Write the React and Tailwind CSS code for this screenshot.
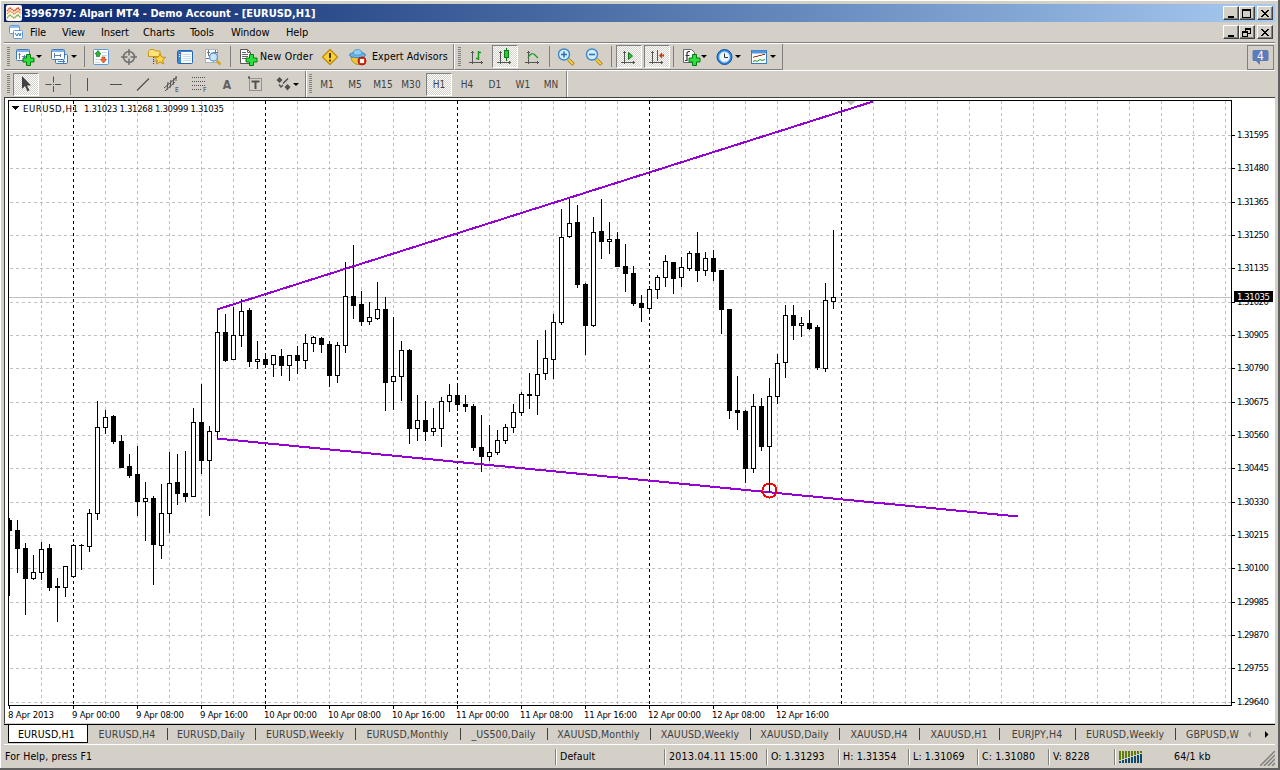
import clsx from 'clsx';

// [high, top, bottom, low, filled], one candle every 8px
const candles = [
  [518, 520, 531, 596, 1], [520, 530, 549, 573, 1], [543, 548, 579, 615, 1], [555, 572, 579, 580, 0],
  [542, 549, 573, 580, 0], [544, 548, 588, 591, 1], [578, 586, 588, 622, 1], [566, 566, 588, 597, 0],
  [544, 545, 577, 578, 0], [544, 545, 546, 570, 1], [509, 513, 547, 552, 0], [401, 427, 514, 520, 0],
  [410, 417, 428, 434, 0], [415, 416, 442, 444, 1], [435, 441, 468, 468, 1], [454, 466, 476, 478, 1],
  [446, 474, 502, 516, 1], [482, 498, 502, 541, 0], [496, 498, 545, 585, 1], [484, 513, 546, 559, 0],
  [452, 483, 514, 533, 0], [454, 482, 494, 505, 1], [451, 493, 497, 502, 1], [408, 422, 497, 497, 0],
  [384, 422, 461, 474, 1], [426, 431, 461, 516, 0], [309, 332, 432, 439, 0], [314, 332, 361, 362, 1],
  [307, 335, 360, 360, 0], [299, 311, 336, 347, 0], [308, 310, 362, 367, 1], [341, 359, 362, 369, 0],
  [355, 359, 365, 368, 1], [355, 355, 365, 377, 0], [349, 356, 366, 376, 1], [355, 355, 366, 381, 0],
  [346, 355, 361, 374, 1], [334, 343, 361, 369, 0], [336, 337, 344, 352, 0], [337, 338, 345, 353, 1],
  [341, 344, 376, 387, 1], [342, 345, 376, 383, 0], [262, 296, 346, 353, 0], [245, 296, 306, 319, 1],
  [291, 304, 322, 326, 1], [302, 317, 322, 325, 0], [282, 309, 319, 320, 0], [297, 309, 383, 411, 1],
  [317, 376, 382, 410, 0], [341, 350, 377, 401, 0], [349, 350, 429, 444, 1], [395, 420, 429, 441, 0],
  [401, 420, 432, 441, 1], [408, 428, 432, 436, 0], [397, 401, 429, 447, 0], [384, 395, 402, 412, 0],
  [386, 395, 405, 411, 1], [395, 404, 407, 412, 1], [404, 406, 448, 451, 1], [415, 447, 457, 472, 1],
  [425, 452, 457, 461, 0], [430, 440, 453, 455, 0], [424, 427, 441, 444, 0], [404, 412, 428, 433, 0],
  [392, 394, 413, 416, 0], [373, 394, 396, 409, 1], [340, 374, 396, 415, 0], [330, 358, 374, 380, 0],
  [314, 322, 360, 379, 0], [209, 237, 323, 325, 0], [197, 223, 237, 238, 0], [205, 222, 285, 288, 1],
  [283, 284, 326, 355, 1], [217, 232, 326, 327, 0], [199, 231, 242, 259, 1], [222, 239, 242, 254, 0],
  [232, 239, 267, 267, 1], [244, 266, 274, 292, 1], [266, 273, 304, 306, 1], [295, 303, 308, 322, 1],
  [286, 289, 309, 312, 0], [275, 277, 290, 299, 0], [255, 261, 278, 287, 0], [262, 262, 279, 294, 1],
  [257, 267, 278, 287, 0], [251, 253, 269, 271, 0], [232, 253, 271, 282, 1], [252, 258, 271, 276, 0],
  [250, 258, 272, 281, 1], [270, 270, 310, 334, 1], [309, 309, 411, 419, 1], [376, 410, 413, 430, 1],
  [410, 411, 469, 483, 1], [394, 406, 469, 473, 0], [398, 406, 447, 451, 1], [378, 396, 447, 492, 0],
  [354, 363, 397, 404, 0], [305, 315, 363, 378, 0], [305, 315, 326, 340, 1], [317, 323, 326, 337, 0],
  [310, 323, 329, 330, 1], [325, 327, 368, 370, 1], [283, 300, 369, 372, 0], [230, 297, 302, 309, 0],
];

const prices = [
  [135, '1.31595'], [168, '1.31480'], [202, '1.31365'], [235, '1.31250'], [268, '1.31135'], [302, '1.31020'],
  [335, '1.30905'], [368, '1.30790'], [402, '1.30675'], [435, '1.30560'], [468, '1.30445'], [502, '1.30330'],
  [535, '1.30215'], [568, '1.30100'], [602, '1.29985'], [635, '1.29870'], [668, '1.29755'], [702, '1.29640'],
];

const dates = [
  '8 Apr 2013', '9 Apr 00:00', '9 Apr 08:00', '9 Apr 16:00', '10 Apr 00:00', '10 Apr 08:00', '10 Apr 16:00',
  '11 Apr 00:00', '11 Apr 08:00', '11 Apr 16:00', '12 Apr 00:00', '12 Apr 08:00', '12 Apr 16:00',
];

const dayLines = [73, 265, 457, 649, 841];
const gridX = Array.from({ length: 38 }, (_, i) => 41 + i * 32).filter(x => x < 1231 && !dayLines.includes(x));

const tabs = [
  ['EURUSD,H4', 'w-[80px]'], ['EURUSD,Daily', 'w-[88px]'], ['EURUSD,Weekly', 'w-[100px]'],
  ['EURUSD,Monthly', 'w-[105px]'], ['_US500,Daily', 'w-[87px]'], ['XAUUSD,Monthly', 'w-[103px]'],
  ['XAUUSD,Weekly', 'w-[100px]'], ['XAUUSD,Daily', 'w-[89px]'], ['XAUUSD,H4', 'w-[80px]'],
  ['XAUUSD,H1', 'w-[80px]'], ['EURJPY,H4', 'w-[76px]'], ['EURUSD,Weekly', 'w-[100px]'],
];

const Chart = () => (
  <svg
    width="1270"
    height="625"
    viewBox="5 98 1270 625"
    shapeRendering="crispEdges"
    className="block bg-white font-['DejaVu_Sans_Condensed','DejaVu_Sans',sans-serif] text-[9.5px]"
  >
    <g stroke="#c0c0c0" strokeDasharray="3 3">
      {prices.map(([y]) => <path key={y} d={`M10 ${y + 0.5}H1231`} />)}
      {gridX.map(x => <path key={x} d={`M${x + 0.5} 101V705`} />)}
    </g>
    <g stroke="#000" strokeDasharray="3 3">
      {dayLines.map(x => <path key={x} d={`M${x + 0.5} 101V705`} />)}
    </g>
    <path d="M9 297.5H1231" stroke="#c0c0c0" />
    <path d="M846 101h9l-4.500 4.500z" fill="#c0c0c0" />

    {candles.map(([high, top, bottom, low, filled], i) => {
      const x = 9 + i * 8;
      return (
        <g key={x}>
          <rect x={x} y={high} width="1" height={low - high} />
          <rect x={i ? x - 2 : x} y={top} width={i ? 5 : 3} height={bottom - top} />
          {!filled && <rect x={x - 1} y={top + 1} width="3" height={bottom - top - 2} fill="#fff" />}
        </g>
      );
    })}

    <g stroke="#9400d3" strokeWidth="2" fill="none">
      <path d="M217 309.5L873 101.5" />
      <path d="M217 438.5L1018 516.5" />
    </g>
    <circle cx="769.5" cy="490.5" r="7" fill="none" stroke="#f00" strokeWidth="2" />
    <path d="M769.5 483V492" stroke="#000" />

    <path d="M8.5 706V100.5H1231.5V705.5H8" fill="none" stroke="#000" />
    {prices.map(([y, label]) => (
      <g key={label}>
        <path d={`M1232 ${y + 0.5}h3`} stroke="#000" />
        <text x="1237" y={y + 3} textLength="32">{label}</text>
      </g>
    ))}
    <rect x="1234" y="291" width="39" height="11" />
    <text x="1237" y="300" textLength="33" fill="#fff">1.31035</text>
    {dates.map((label, i) => (
      <g key={label}>
        <path d={`M${9.5 + i * 64} 706v3`} stroke="#000" />
        <text x={8 + i * 64} y="718" textLength={i === 0 ? 46 : i < 4 ? 48 : 53}>{label}</text>
      </g>
    ))}
    <path d="M12 106h7l-3.500 4z" />
    <text x="23" y="112" textLength="55">EURUSD,H1</text>
    <text x="84" y="112" textLength="140">1.31023 1.31268 1.30999 1.31035</text>
  </svg>
);

const Svg = ({ children }) => (
  <svg width="18" height="18" viewBox="0 0 18 18" fill="none" className="shrink-0 overflow-visible">{children}</svg>
);

const Plus = () => (
  <path
    transform="translate(7 6)"
    d="M3.500 .5h4v3.500h3.500v4h-3.500v3.500h-4v-3.500h-3.500v-4h3.500z"
    fill="#2be03c"
    stroke="#087a12"
  />
);

const ChartPlus = () => (
  <Svg>
    <rect x=".5" y="1.500" width="13" height="11" rx="1" fill="#fff" stroke="#3f7ab8" />
    <path d="M1 3h12" stroke="#7db4e8" strokeWidth="2" />
    <path d="M3.500 5v6M2.500 6.500h2M6 8.500h4M8.500 7v3" stroke="#5a7fae" />
    <Plus />
  </Svg>
);
const Profiles = () => (
  <Svg>
    <rect x="4.500" y="6.500" width="12" height="9" rx="1" fill="#e9f3fd" stroke="#3f7ab8" />
    <rect x=".5" y="1.500" width="13" height="10" rx="1" fill="#fff" stroke="#3f7ab8" />
    <path d="M1 3h12" stroke="#7db4e8" strokeWidth="2" />
    <path d="M3.500 5v5M3 7.500h7M9.500 6v3M7 13.500h7M12.500 12v3" stroke="#5a7fae" />
  </Svg>
);
const MarketWatch = () => (
  <Svg>
    <rect x="1.500" y="1.500" width="15" height="15" rx="1" fill="#fff" stroke="#5a9be0" />
    <path d="M10 4.500h5M10 7.500h5M3 11.500h5M3 14.500h5" stroke="#c5d9ee" />
    <path d="M6 2.500l3 3.500h-1.500v2.500h-3v-2.500h-1.500z" fill="#2fb23a" stroke="#0d7a1a" strokeWidth=".7" />
    <path d="M11.500 15l3-3.500h-1.500v-2.500h-3v2.500h-1.500z" fill="#f0703a" stroke="#b83a10" strokeWidth=".7" />
  </Svg>
);
const Target = () => (
  <Svg>
    <circle cx="9" cy="9" r="5.500" stroke="#6e6e6e" strokeWidth="1.500" />
    <path d="M9 1v6.500M9 10.500v6.500M1 9h6.500M10.500 9h6.500" stroke="#6e6e6e" strokeWidth="1.500" />
  </Svg>
);
const Navigator = () => (
  <Svg>
    <path d="M.5 3.500l1.500-2h4l1 1.500h5v5.500h-11.500z" fill="#fce27a" stroke="#c99a1a" />
    <path d="M5.500 9v7M5.500 13h3" stroke="#444" strokeDasharray="1 1" />
    <path d="M12 5.500l1.600 3.600 4 .3-3 2.600 1 4-3.600-2.100-3.600 2.100 1-4-3-2.600 4-.3z" fill="#ffd94a" stroke="#c58d10" />
  </Svg>
);
const Terminal = () => (
  <Svg>
    <rect x="1.500" y="2.500" width="15" height="13" rx="1" fill="#fff" stroke="#2264b0" />
    <path d="M2 3.500h14" stroke="#3e86d6" />
    <path d="M3.500 4v11" stroke="#3e86d6" strokeWidth="3" />
    <path d="M7 6.500h8M7 8.500h8M7 10.500h8M7 12.500h8" stroke="#c4daf2" />
    <path d="M3 6.500h1M3 8.500h1" stroke="#fff" />
    <path d="M3 5.500h2" stroke="#e22" />
  </Svg>
);
const Tester = () => (
  <Svg>
    <rect x="1.500" y="1.500" width="12" height="13" fill="#fff" stroke="#a9b4c0" />
    <path d="M4.500 2v6M3 4.500h3M11.500 2v6M9 4.500h5M2 10.500h3" stroke="#68737e" />
    <path d="M12.500 12.500l4 4" stroke="#d8a520" strokeWidth="2.500" />
    <circle cx="9.500" cy="9" r="4" fill="#c8e5fb" stroke="#5c98cf" strokeWidth="1.300" />
  </Svg>
);
const NewOrderIcon = () => (
  <Svg>
    <path d="M1.500 1.500h7l3 3v11h-10z" fill="#fff" stroke="#555" />
    <path d="M8.500 1.500v3h3M3 4.500h4M3 6.500h6M3 8.500h6M3 10.500h4" stroke="#666" />
    <Plus />
  </Svg>
);
const Warning = () => (
  <Svg>
    <path d="M9 1.500l7.500 7.500-7.500 7.500-7.500-7.500z" fill="#fbd034" stroke="#c08a0c" strokeLinejoin="round" strokeWidth="1.300" />
    <path d="M9 5v5M9 11.500v2" stroke="#4a3500" strokeWidth="2" />
  </Svg>
);
const Expert = () => (
  <Svg>
    <path d="M2 8.500c0 5 4 8 7.500 8s5-2 5.500-7z" fill="#f0c637" stroke="#b88a18" />
    <ellipse cx="8.500" cy="7" rx="8" ry="2.800" fill="#6cb6e6" stroke="#3b84bd" />
    <path d="M4 6c0-3 1.500-4.500 4.500-4.500s4.500 1.500 4.500 4.500c-2 1.500-7 1.500-9 0z" fill="#8fd0f4" stroke="#3b84bd" strokeWidth=".7" />
    <circle cx="13" cy="13" r="4" fill="#e03018" stroke="#a81c08" />
    <rect x="11" y="11" width="4" height="4" fill="#fff" />
  </Svg>
);
const axes = 'M4.500 3v13M1 14.500h14M3 4.500h3M13.500 13v3';
const Bars = () => (
  <Svg>
    <path d={axes} stroke="#555" />
    <path d="M10.500 3v9M11 4.500h2M8 10.500h2" stroke="#159a1d" strokeWidth="1.500" />
  </Svg>
);
const CandleIcon = () => (
  <Svg>
    <path d={axes} stroke="#555" />
    <path d="M10.500 0v13" stroke="#0b7a15" />
    <rect x="8.500" y="2.500" width="4" height="7" fill="#26cc3a" stroke="#0b7a15" />
  </Svg>
);
const LineIcon = () => (
  <Svg>
    <path d={axes} stroke="#555" />
    <path d="M4 10c2-5 5-5 7-3l3 3" stroke="#159a1d" strokeWidth="1.200" />
  </Svg>
);
const Zoom = ({ plus }) => (
  <Svg>
    <path d="M11.500 11.500l5 5" stroke="#a8780d" strokeWidth="3.500" />
    <path d="M11.500 11.500l4.500 4.500" stroke="#f5d442" strokeWidth="2" />
    <circle cx="7" cy="6.500" r="5.500" fill="#d3edff" stroke="#3b86c8" strokeWidth="1.400" />
    <path d={plus ? 'M4 6.500h6M7 3.500v6' : 'M4 6.500h6'} stroke="#2d73b4" strokeWidth="1.600" />
  </Svg>
);
const AutoScroll = () => (
  <Svg>
    <path d={axes} stroke="#555" />
    <path d="M8.500 4.500v7l4-3.500z" fill="#26c636" stroke="#0b7a15" />
  </Svg>
);
const ChartShift = () => (
  <Svg>
    <path d={axes} stroke="#555" />
    <path d="M9.500 2v11" stroke="#1b66a8" />
    <path d="M11 7.500l3-3v2h2v2h-2v2z" fill="#c63c10" />
  </Svg>
);
const Indicators = () => (
  <Svg>
    <path d="M1.500 1.500h8l3 3v10h-11z" fill="#fff" stroke="#666" />
    <path d="M8 3.500h-1.500l-1.500 1v8l-2 0M3.500 7.500h4" stroke="#333" strokeWidth="1.200" />
    <Plus />
  </Svg>
);
const Clock = () => (
  <Svg>
    <circle cx="8.500" cy="9" r="7.500" fill="#2b86de" stroke="#12539d" />
    <circle cx="8.500" cy="9" r="5.300" fill="#eef6fd" stroke="#9ecbf3" />
    <path d="M8.500 5.500v4h3.500" stroke="#333" />
  </Svg>
);
const Template = () => (
  <Svg>
    <rect x=".5" y="2.500" width="15" height="13" fill="#fff" stroke="#3f7ab8" />
    <path d="M1 4h14" stroke="#4f96de" strokeWidth="3" />
    <path d="M2 9.500l2-1h2l2-1h2l2-1h2" stroke="#a33414" />
    <path d="M2 13.500l2-1 2 1 3-2 2 1 3-1" stroke="#18902a" />
  </Svg>
);

const Drop = ({ className }) => (
  <svg width="6" height="3" className={clsx('shrink-0', className)}><path d="M0 0h6l-3 3z" /></svg>
);
const Grip = () => (
  <div className="h-[20px] w-[3px] shrink-0 bg-[repeating-linear-gradient(180deg,#808080_0px,#808080_1px,#d4d0c8_1px,#d4d0c8_2px)]" />
);
const Sep = ({ className }) => <div className={clsx('h-[21px] w-px shrink-0 bg-[#808080]', className)} />;

const Cell = ({ pressed, children }) => (
  <div className="flex h-full w-[28px] shrink-0 items-center justify-center">
    <div
      className={clsx(
        'flex h-[23px] w-[26px] items-center justify-center',
        pressed &&
          'border border-t-[#808080] border-l-[#808080] border-r-white border-b-white bg-[repeating-conic-gradient(#fff_0_25%,#d4d0c8_0_50%)] bg-[length:2px_2px]'
      )}
    >
      {children}
    </div>
  </div>
);

const WinButton = ({ children, className }) => (
  <div className={clsx('flex h-[14px] w-[16px] items-center justify-center border border-t-white border-l-white border-r-[#404040] border-b-[#404040] bg-[#d4d0c8] shadow-[inset_-1px_-1px_0_#808080]', className)}>
    <svg width="12" height="11" viewBox="0 0 12 11" fill="none" stroke="#000" shapeRendering="crispEdges">{children}</svg>
  </div>
);

const WinButtons = ({ restore }) => (
  <div className="ml-auto flex">
    <WinButton><path d="M3 9h6" strokeWidth="2" /></WinButton>
    <WinButton>
      {restore ? (
        <path d="M4 1.500h6M4 2.500h6M4.500 1v3M9.500 2v5M7 6.500h3M1 4.500h6M1 5.500h6M1.500 4v6M6.500 4v6M1 9.500h6" />
      ) : (
        <path d="M1.500 1v9M9.500 1v9M1 1.500h9M1 2.500h9M1 9.500h9" />
      )}
    </WinButton>
    <WinButton className="ml-[2px]"><path d="M2 2l7 7M3 2l7 7M9 2l-7 7M10 2l-7 7" /></WinButton>
  </div>
);

const StatusCell = ({ children, className }) => (
  <div className={clsx('flex h-[16px] shrink-0 items-center border-l border-[#808080] pl-[4px] whitespace-nowrap shadow-[inset_1px_0_0_#fff]', className)}>
    {children}
  </div>
);

const App = () => (
  <div className="flex h-[770px] w-[1280px] flex-col overflow-hidden border-r-2 border-b-2 border-[#606060] bg-[#d4d0c8] pt-[4px] pr-[3px] pl-[4px] font-['DejaVu_Sans_Condensed','DejaVu_Sans',sans-serif] text-[10.5px] leading-none tracking-[0.12px] text-black shadow-[inset_1px_1px_0_#fff]">
    <div className="flex h-[18px] shrink-0 items-center bg-linear-to-r from-[#0a246a] to-[#a6caf0] pr-[2px] pl-[2px]">
      <svg width="16" height="16" viewBox="0 0 16 16" fill="none" className="rounded-[2px] bg-[#fff8ec]">
        <path d="M1 6l3-3 4 3 4-3 3 3" stroke="#d9472b" strokeWidth="1.500" strokeDasharray="1.500 .5" />
        <path d="M1 9l3-3 4 3 4-3 3 3" stroke="#ef8b3d" strokeWidth="1.500" strokeDasharray="1.500 .5" />
        <path d="M1 13l3-3 4 3 4-3 3 3" stroke="#6fae4e" strokeWidth="1.500" strokeDasharray="1.500 .5" />
      </svg>
      <span className="ml-[2px] text-[11px] font-bold tracking-[-0.01px] whitespace-nowrap text-white">
        3996797: Alpari MT4 - Demo Account - [EURUSD,H1]
      </span>
      <WinButtons />
    </div>

    <div className="flex h-[21px] shrink-0 items-center border-b border-[#808080] pr-[2px] pl-[4px]">
      <svg width="16" height="16" viewBox="0 0 16 16" fill="none">
        <rect x="1.500" y="1.500" width="10" height="8" rx="1" fill="#fff" stroke="#5a9be0" />
        <path d="M2 3h9" stroke="#8fc0f0" strokeWidth="2" />
        <rect x="5.500" y="6.500" width="9" height="8" rx="1" fill="#fff" stroke="#5a9be0" />
        <path d="M7 9l2 3 1.500-3 1.500 3 1-3" stroke="#3f7ab8" />
      </svg>
      <div className="flex text-[11px] tracking-[-0.1px]">
        <span className="w-[32px] pl-[6px]">File</span>
        <span className="ml-[6px] w-[39px]">View</span>
        <span className="w-[42px]">Insert</span>
        <span className="w-[47px]">Charts</span>
        <span className="w-[41px]">Tools</span>
        <span className="w-[55px]">Window</span>
        <span>Help</span>
      </div>
      <WinButtons restore />
    </div>

    <div className="flex h-[27px] shrink-0 border-t border-white">
      <div className="flex h-full w-[450px] items-center border-r border-b border-[#808080] pl-[3px]">
        <Grip />
        <div className="ml-[6px] flex w-[34px] items-center"><ChartPlus /><Drop className="ml-[2px]" /></div>
        <div className="ml-px flex w-[29px] items-center"><Profiles /><Drop className="ml-[2px]" /></div>
        <Sep className="ml-[4px] mr-[2px]" />
        <Cell><MarketWatch /></Cell>
        <Cell><Target /></Cell>
        <Cell><Navigator /></Cell>
        <Cell><Terminal /></Cell>
        <Cell><Tester /></Cell>
        <Sep className="ml-[3px] mr-[8px]" />
        <div className="flex w-[77px] items-center whitespace-nowrap"><NewOrderIcon /><span className="ml-[3px] tracking-[0.3px]">New Order</span></div>
        <Cell><Warning /></Cell>
        <div className="ml-[5px] flex items-center whitespace-nowrap"><Expert /><span className="ml-[5px]">Expert Advisors</span></div>
      </div>
      <div className="flex h-full w-[329px] items-center border-r border-b border-l border-[#808080] border-l-white pl-[3px]">
        <Grip />
        <div className="w-[2px]" />
        <Cell><Bars /></Cell>
        <Cell pressed><CandleIcon /></Cell>
        <Cell><LineIcon /></Cell>
        <Sep className="ml-[2px] mr-[2px]" />
        <Cell><Zoom plus /></Cell>
        <Cell><Zoom /></Cell>
        <Sep className="ml-[3px] mr-[3px]" />
        <Cell pressed><AutoScroll /></Cell>
        <Cell pressed><ChartShift /></Cell>
        <Sep className="ml-[2px] mr-[8px]" />
        <div className="flex w-[34px] items-center"><Indicators /><Drop className="ml-px" /></div>
        <div className="flex w-[35px] items-center"><Clock /><Drop className="ml-px" /></div>
        <div className="flex items-center"><Template /><Drop className="ml-px" /></div>
      </div>
      <div className="mt-px mr-px ml-auto flex h-[25px] w-[27px] items-center justify-center border border-[#808080]">
        <svg width="17" height="17" viewBox="0 0 17 17">
          <path d="M2 1h13q1.500 0 1.500 1.500v8q0 1.500-1.500 1.500h-7v4l-4-4h-2q-1.500 0-1.500-1.500v-8q0-1.500 1.500-1.500z" fill="#5b7cb8" />
          <text x="5" y="11" fill="#fff" fontSize="12">4</text>
        </svg>
      </div>
    </div>

    <div className="flex h-[27px] shrink-0 items-center border-t border-white text-[#404040]">
      <div className="flex h-full w-[302px] items-center border-r border-[#808080] pl-[3px]">
        <Grip />
        <div className="w-[2px]" />
        <Cell pressed>
          <Svg><path d="M5 1v13l3-3 2.500 5.500 2-1-2.500-5h4z" fill="#404040" /></Svg>
        </Cell>
        <Cell><Svg><path d="M8.500 1.500v6M8.500 11v6M.5 9.500h6M10 9.500h6M8 9.500h1" stroke="#505050" /></Svg></Cell>
        <Sep className="ml-[2px] mr-[2px]" />
        <Cell><Svg><path d="M9.500 3v13" stroke="#505050" /></Svg></Cell>
        <Cell><Svg><path d="M4 9.500h12" stroke="#505050" /></Svg></Cell>
        <Cell><Svg><path d="M3 15.500l12-12" stroke="#505050" strokeWidth="1.200" /></Svg></Cell>
        <Cell>
          <Svg>
            <path d="M2 13l13-11M3 16l10-9M6 7l-1 8M9 5l-1 8M12 3l-1 7M14 1v5" stroke="#505050" />
            <text x="13" y="17" fill="#404040" fontSize="7">E</text>
          </Svg>
        </Cell>
        <Cell>
          <Svg>
            <path d="M2 2.500h14M2 6.500h14M2 10.500h14M2 14.500h9" stroke="#505050" strokeDasharray="1 1" />
            <text x="13" y="17" fill="#404040" fontSize="7">F</text>
          </Svg>
        </Cell>
        <Cell><span className="pt-px text-[12px] font-bold text-[#606060]">A</span></Cell>
        <Cell>
          <Svg>
            <rect x="3.500" y="3.500" width="12" height="12" stroke="#505050" strokeDasharray="1 1" />
            <path d="M2 2.500h2M5.500 6.500h8M9.500 6v8" stroke="#505050" strokeWidth="2" />
          </Svg>
        </Cell>
        <div className="ml-[6px] flex items-center">
          <Svg>
            <path d="M4.500 2l3 3-3 3-3-3zM12.500 9l3 3-3 3.500-3-3.500z" fill="#505050" />
            <path d="M4 9.500l2 2.500 2-2M8 8.500l5-5" stroke="#505050" strokeWidth="1.500" />
          </Svg>
          <Drop />
        </div>
      </div>
      <div className="flex h-full w-[261px] items-center border-r border-l border-[#808080] border-l-white pl-[2px] text-[10px]">
        <Grip />
        <div className="w-px" />
        {['M1', 'M5', 'M15', 'M30', 'H1', 'H4', 'D1', 'W1', 'MN'].map(tf => (
          <Cell key={tf} pressed={tf === 'H1'}><span className="pt-[2px]">{tf}</span></Cell>
        ))}
      </div>
      <div className="h-full w-px bg-white" />
    </div>

    <div className="h-[627px] shrink-0 border-t border-b border-l border-t-[#404040] border-b-[#d4d0c8] border-l-[#404040]">
      <Chart />
    </div>

    <div className="flex h-[21px] shrink-0 items-start border-t border-b border-t-black border-b-white text-[#404040]">
      <div className="ml-[4px] flex h-[18px] w-[80px] items-center border-r border-b border-l border-black bg-white pl-[9px] text-black">
        <span className="pt-px">EURUSD,H1</span>
      </div>
      {tabs.map(([label, width], i) => (
        <div key={i} className={clsx('flex h-[18px] shrink-0 items-center justify-center whitespace-nowrap', width)}>
          <span className="flex-1 pr-px text-center">{label}</span>
          <span className="h-[12px] w-px bg-[#404040]" />
        </div>
      ))}
      <div className="flex h-[18px] w-[64px] items-center overflow-hidden pl-[10px] whitespace-nowrap">GBPUSD,W</div>
      <svg width="30" height="18" className="shrink-0"><path d="M11 6v7l-3.500-3.500z" fill="#999" /><path d="M25 6v7l3.500-3.500z" /></svg>
    </div>

    <div className="flex h-[22px] shrink-0 items-center pt-px">
      <div className="w-[551px] pl-px">For Help, press F1</div>
      <StatusCell className="w-[109px]">Default</StatusCell>
      <StatusCell className="w-[102px] tracking-[0.3px]">2013.04.11 15:00</StatusCell>
      <StatusCell className="w-[72px]">O: 1.31293</StatusCell>
      <StatusCell className="w-[70px]">H: 1.31354</StatusCell>
      <StatusCell className="w-[69px]">L: 1.31069</StatusCell>
      <StatusCell className="w-[71px]">C: 1.31080</StatusCell>
      <StatusCell className="w-[66px]">V: 8228</StatusCell>
      <StatusCell className="w-[60px]">
        <svg width="24" height="12" shapeRendering="crispEdges">
          {[0, 1, 2, 3, 4, 5, 6, 7].map(i => (
            <g key={i}>
              <rect x={i * 3} y="0" width="2" height={9 - i} fill="#5f7d0e" />
              <rect x={i * 3} y={10 - i} width="2" height={2 + i} fill="#0d4a6b" />
            </g>
          ))}
        </svg>
      </StatusCell>
      <span className="whitespace-nowrap">64/1 kb</span>
      <svg width="15" height="15" className="mt-[4px] ml-auto" stroke="#808080" strokeWidth="1.500">
        <path d="M0 15L15 0M4 15L15 4M8 15L15 8M12 15L15 12" />
      </svg>
    </div>
  </div>
);

export default App;
